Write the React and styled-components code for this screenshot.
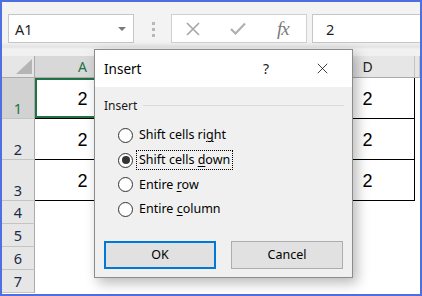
import React from "react";
import styled, { createGlobalStyle } from "styled-components";

const Global = createGlobalStyle`
  html, body { margin: 0; padding: 0; background: #fff; }
  * { box-sizing: border-box; }
`;

const UI = `"Noto Sans", "Open Sans", sans-serif`;

const Frame = styled.div`
  position: relative;
  width: 422px;
  height: 296px;
  border: 2px solid #4d6fe0;
  background: #fff;
  overflow: hidden;
  font-family: ${UI};
  color: #000;
`;

const Toolbar = styled.div`
  height: 54px;
  display: flex;
  align-items: flex-start;
  padding: 12px 0 0 6px;
  background: linear-gradient(#f3f3f3 0px, #f3f3f3 40px, #e4e4e4 45px, #f1f1f1 47px, #f1f1f1 100%);
`;

const NameBox = styled.div`
  width: 126px;
  height: 29px;
  background: #fff;
  border: 1px solid #c6c6c6;
  display: flex;
  align-items: center;
  padding-left: 6px;
  padding-right: 7px;
  font-size: 14.5px;
  color: #1f1f1f;
`;

const NameText = styled.span`
  flex: 1;
`;

const Caret = styled.span`
  width: 0;
  height: 0;
  border-left: 4px solid transparent;
  border-right: 4px solid transparent;
  border-top: 4px solid #7a7a7a;
`;

const Dots = styled.div`
  margin: 8px 0 0 18px;
  display: flex;
  flex-direction: column;
  gap: 3px;
`;

const Dot = styled.span`
  width: 3px;
  height: 3px;
  background: #b8b8b8;
`;

const FxBox = styled.div`
  margin-left: 16px;
  width: 136px;
  height: 29px;
  background: #fff;
  border: 1px solid #d0d0d0;
  display: flex;
  align-items: center;
  padding-left: 14px;
  gap: 30px;
`;

const FxText = styled.span`
  font-family: "Liberation Serif", "DejaVu Serif", serif;
  font-style: italic;
  font-size: 19px;
  color: #7a7a7a;
  margin-left: 1px;
  letter-spacing: -1px;
`;

const FormulaInput = styled.div`
  margin-left: 5px;
  flex: 1;
  height: 29px;
  background: #fff;
  border: 1px solid #c6c6c6;
  border-right: none;
  display: flex;
  align-items: center;
  padding-left: 13px;
  font-size: 14.5px;
  color: #1f1f1f;
`;

const Sheet = styled.div`
  display: grid;
  grid-template-columns: 33px 96px 95px 95px 94px 1fr;
  grid-template-rows: 22px 41px 41px 41px 23px 23px 23px 23px;
`;

const ColHead = styled.div`
  background: ${(p) => (p.$sel ? "#d8d8d8" : "#e6e6e6")};
  border-right: 1px solid #c4c4c4;
  border-bottom: 1px solid #ababab;
  display: flex;
  align-items: center;
  justify-content: center;
  font-size: 14px;
  color: ${(p) => (p.$sel ? "#217346" : "#222")};
`;

const Corner = styled.div`
  background: #e6e6e6;
  border-right: 1px solid #ababab;
  border-bottom: 1px solid #ababab;
  display: flex;
  align-items: flex-end;
  justify-content: flex-end;
  padding: 0 2px 3px 0;
`;

const RowHead = styled.div`
  background: ${(p) => (p.$sel ? "#d2d2d2" : "#e6e6e6")};
  border-right: 1px solid #ababab;
  border-bottom: 1px solid #c4c4c4;
  display: flex;
  justify-content: center;
  align-items: ${(p) => (p.$tall ? "flex-end" : "center")};
  padding-bottom: ${(p) => (p.$tall ? "1px" : "0")};
  font-size: 14.5px;
  line-height: 18px;
  color: ${(p) => (p.$sel ? "#217346" : "#1e2a44")};
`;

const Cell = styled.div`
  background: #fff;
  border-right: ${(p) => (p.$boxed ? "1px solid #000" : "none")};
  border-bottom: ${(p) => (p.$boxed ? "1px solid #000" : "none")};
  box-shadow: ${(p) => (p.$active ? "inset 0 0 0 2px #217346" : "none")};
  display: flex;
  align-items: center;
  justify-content: center;
  padding-top: 3px;
  font-family: "Liberation Sans", Arial, sans-serif;
  font-size: 18px;
`;

const Dialog = styled.div`
  position: absolute;
  left: 92px;
  top: 47px;
  width: 259px;
  height: 229px;
  border: 1px solid #8c8c8c;
  background: #f0f0f0;
  box-shadow: 4px 5px 12px rgba(0, 0, 0, 0.28);
  display: flex;
  flex-direction: column;
`;

const TitleBar = styled.div`
  height: 37px;
  background: #fff;
  display: flex;
  align-items: center;
  padding-left: 9px;
  padding-right: 24px;
  font-size: 13.5px;
  color: #000;
`;

const Title = styled.span`
  flex: 1;
`;

const Help = styled.span`
  font-size: 14px;
  margin-right: 48px;
  color: #222;
`;

const Body = styled.div`
  flex: 1;
  padding: 9px 8px 0 9px;
  display: flex;
  flex-direction: column;
`;

const GroupHead = styled.div`
  display: flex;
  align-items: center;
  font-size: 12px;
  height: 18px;
  color: #1a1a1a;
`;

const GroupLine = styled.span`
  flex: 1;
  height: 1px;
  background: #dadada;
  margin-left: 6px;
  margin-top: 1px;
`;

const RadioList = styled.div`
  margin-top: 9px;
  padding-left: 14px;
  display: flex;
  flex-direction: column;
`;

const RadioRow = styled.div`
  height: 24.7px;
  display: flex;
  align-items: center;
  gap: 4px;
`;

const Circle = styled.span`
  width: 15px;
  height: 15px;
  border-radius: 50%;
  border: 1px solid #333;
  background: #fff;
  display: flex;
  align-items: center;
  justify-content: center;
  &::after {
    content: "";
    width: 8px;
    height: 8px;
    border-radius: 50%;
    background: ${(p) => (p.$on ? "#333" : "transparent")};
  }
`;

const Label = styled.span`
  font-size: 12.5px;
  line-height: 16px;
  padding: 1px 2px;
  outline: ${(p) => (p.$focus ? "1px dotted #000" : "none")};
  color: #000;
  u { text-decoration: underline; text-underline-offset: 2px; }
`;

const Buttons = styled.div`
  margin-top: 19px;
  display: flex;
  gap: 15px;
`;

const Button = styled.div`
  width: 112px;
  height: 28px;
  background: #e1e1e1;
  border: ${(p) => (p.$primary ? "2px solid #0078d7" : "1px solid #adadad")};
  display: flex;
  align-items: center;
  justify-content: center;
  font-size: 12.5px;
  color: #000;
`;

const CrossIcon = ({ size = 14, color = "#a6a6a6", w = 1.6 }) => (
  <svg width={size} height={size} viewBox="0 0 14 14">
    <path d="M1 1 L13 13 M13 1 L1 13" stroke={color} strokeWidth={w} fill="none" />
  </svg>
);

const CheckIcon = () => (
  <svg width="16" height="13" viewBox="0 0 16 13">
    <path d="M1 7 L5.5 11.5 L15 1.5" stroke="#b0b0b0" strokeWidth="2.2" fill="none" />
  </svg>
);

const SelectAll = () => (
  <svg width="16" height="15" viewBox="0 0 16 15">
    <polygon points="16,0 16,15 0,15" fill="#b5b5b5" />
  </svg>
);

const cols = ["A", "B", "C", "D", "E"];
const options = [
  { pre: "Shift cells ri", key: "g", post: "ht" },
  { pre: "Shift cells ", key: "d", post: "own", on: true },
  { pre: "Entire ", key: "r", post: "ow" },
  { pre: "Entire ", key: "c", post: "olumn" },
];

export default function App() {
  const rows = [1, 2, 3, 4, 5, 6, 7];
  return (
    <>
      <Global />
      <Frame>
        <Toolbar>
          <NameBox>
            <NameText>A1</NameText>
            <Caret />
          </NameBox>
          <Dots>
            <Dot />
            <Dot />
            <Dot />
          </Dots>
          <FxBox>
            <CrossIcon />
            <CheckIcon />
            <FxText>fx</FxText>
          </FxBox>
          <FormulaInput>2</FormulaInput>
        </Toolbar>
        <Sheet>
          <Corner>
            <SelectAll />
          </Corner>
          {cols.map((c) => (
            <ColHead key={c} $sel={c === "A"}>
              {c === "E" ? "" : c}
            </ColHead>
          ))}
          {rows.map((r) => (
            <React.Fragment key={r}>
              <RowHead $sel={r === 1} $tall={r <= 3}>
                {r}
              </RowHead>
              {cols.map((c) => {
                const boxed = r <= 3 && c !== "E";
                return (
                  <Cell key={c} $boxed={boxed} $active={r === 1 && c === "A"}>
                    {boxed ? "2" : ""}
                  </Cell>
                );
              })}
            </React.Fragment>
          ))}
        </Sheet>
        <Dialog>
          <TitleBar>
            <Title>Insert</Title>
            <Help>?</Help>
            <CrossIcon size={11} color="#222" w={1.1} />
          </TitleBar>
          <Body>
            <GroupHead>
              Insert
              <GroupLine />
            </GroupHead>
            <RadioList>
              {options.map((o, i) => (
                <RadioRow key={i}>
                  <Circle $on={o.on} />
                  <Label $focus={o.on}>
                    {o.pre}
                    <u>{o.key}</u>
                    {o.post}
                  </Label>
                </RadioRow>
              ))}
            </RadioList>
            <Buttons>
              <Button $primary>OK</Button>
              <Button>Cancel</Button>
            </Buttons>
          </Body>
        </Dialog>
      </Frame>
    </>
  );
}
